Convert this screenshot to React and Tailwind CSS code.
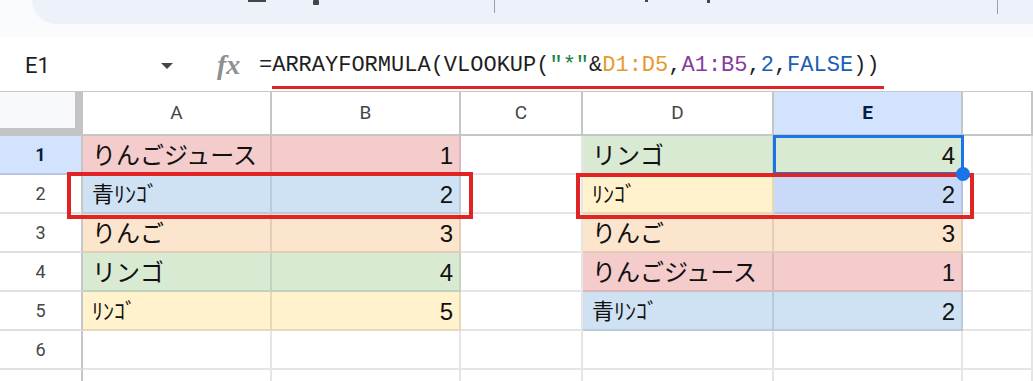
import React from "react";

const cols = "grid-cols-[83px_189px_189px_122px_191px_189px_70px]";

const left = [
  { t: "りんごジュース", n: 1, bg: "bg-[#f4cccc]" },
  { t: "青ﾘﾝｺﾞ", n: 2, bg: "bg-[#cfe2f3]", small: true },
  { t: "りんご", n: 3, bg: "bg-[#fce5cd]" },
  { t: "リンゴ", n: 4, bg: "bg-[#d9ead3]" },
  { t: "ﾘﾝｺﾞ", n: 5, bg: "bg-[#fff2cc]", small: true },
];

const right = [
  { t: "リンゴ", n: 4, bg: "bg-[#d9ead3]", nbg: "bg-[#d9ead3]" },
  { t: "ﾘﾝｺﾞ", n: 2, bg: "bg-[#fff2cc]", nbg: "bg-[#c9daf8]", small: true },
  { t: "りんご", n: 3, bg: "bg-[#fce5cd]", nbg: "bg-[#fce5cd]" },
  { t: "りんごジュース", n: 1, bg: "bg-[#f4cccc]", nbg: "bg-[#f4cccc]" },
  { t: "青ﾘﾝｺﾞ", n: 2, bg: "bg-[#cfe2f3]", nbg: "bg-[#cfe2f3]", small: true },
];

const cell = "h-[39px] border-r-2 border-b-2 border-black/[0.1] flex items-center";
const cellFont = "font-['Liberation_Sans','Noto_Sans_CJK_JP',sans-serif] text-[#111] leading-none";

function TextCell({ row }) {
  if (!row) return <div className={`${cell}`} />;
  return (
    <div className={`${cell} ${row.bg} ${cellFont} pl-[9px] pt-[2px] ${row.small ? "text-[22px]" : "text-[24px]"}`}>
      {row.t}
    </div>
  );
}

function NumCell({ row, bg }) {
  if (!row) return <div className={`${cell}`} />;
  return (
    <div className={`${cell} ${bg || row.bg} ${cellFont} justify-end pr-[6px] pt-[2px] text-[24px]`}>
      {row.n}
    </div>
  );
}

export default function App() {
  const rows = [0, 1, 2, 3, 4, 5, 6];
  return (
    <div className="relative w-[1033px] h-[381px] overflow-hidden bg-white font-['Roboto',sans-serif]">
      {/* toolbar strip */}
      <div className="h-[37px] bg-[#f9fbfd] pl-[32px]">
        <div className="h-[24px] bg-[#edf2fa] rounded-bl-[24px]">
          <svg width="1001" height="24" viewBox="0 0 1001 24">
            <rect x="216" y="0" width="18" height="2" fill="#444746" />
            <rect x="281" y="0" width="6" height="5" rx="1" fill="#444746" />
            <rect x="613" y="0" width="3" height="2" fill="#444746" />
            <rect x="675" y="0" width="3" height="3" fill="#444746" />
            <rect x="462" y="0" width="1" height="13" fill="#9aa0a6" />
            <rect x="965" y="0" width="1" height="14" fill="#9aa0a6" />
          </svg>
        </div>
      </div>

      {/* formula bar */}
      <div className="h-[55px] flex items-center pt-[4px] border-b border-[#c7c7c7]">
        <div className="w-[190px] flex items-center pl-[25px]">
          <span className="text-[22px] leading-none text-[#1f1f1f]">E1</span>
          <svg className="ml-auto mr-[17px]" width="12" height="6" viewBox="0 0 12 6">
            <path d="M0 0 L12 0 L6 6 Z" fill="#444746" />
          </svg>
        </div>
        <div className="ml-[27px] w-[26px] text-[28px] leading-none italic font-bold text-[#8f8f8f] font-['Liberation_Serif',serif] pb-[2px]">
          fx
        </div>
        <div className="ml-[16px] text-[22px] leading-none text-[#1f1f1f] font-['Liberation_Mono',monospace] whitespace-pre">
          =ARRAYFORMULA(VLOOKUP(
          <span className="text-[#188038]">"*"</span>&amp;
          <span className="text-[#e69a2e]">D1:D5</span>,
          <span className="text-[#8a3a9c]">A1:B5</span>,
          <span className="text-[#1a5fb4]">2</span>,
          <span className="text-[#1a5fb4]">FALSE</span>))
        </div>
      </div>

      {/* sheet grid */}
      <div className={`grid ${cols}`}>
        <div className="h-[44px] bg-[#f8f9fa] border-r-[8px] border-b-[8px] border-[#c4c4c4]" />
        {["A", "B", "C", "D", "E", "F"].map((c) => (
          <div
            key={c}
            className={`h-[44px] border-r-2 border-b-2 border-[#c4c7c5] flex items-center justify-center text-[19px] ${
              c === "E" ? "bg-[#d3e3fd] font-bold text-[#041e49]" : "text-[#444746]"
            }`}
          >
            {c === "F" ? "" : c}
          </div>
        ))}

        {rows.map((i) => (
          <React.Fragment key={i}>
            <div
              className={`h-[39px] border-r-2 border-b-2 border-r-[#c4c7c5] border-b-black/[0.12] flex items-center justify-center text-[18px] ${
                i === 0 ? "bg-[#d3e3fd] font-bold text-[#041e49]" : "text-[#444746]"
              }`}
            >
              {i + 1}
            </div>
            <TextCell row={left[i]} />
            <NumCell row={left[i]} />
            <div className={cell} />
            <TextCell row={right[i]} />
            <NumCell row={right[i]} bg={right[i] && right[i].nbg} />
            <div className={cell} />
          </React.Fragment>
        ))}
      </div>

      {/* annotations and selection */}
      <div className="absolute left-[272px] top-[86px] w-[612px] h-[3px] bg-[#e02424]" />
      <div className="absolute left-[773px] top-[135px] w-[191px] h-[40px] border-[3px] border-[#1a73e8]" />
      <div className="absolute left-[67px] top-[172px] w-[406px] h-[47px] border-4 border-[#e02424]" />
      <div className="absolute left-[576px] top-[173px] w-[398px] h-[46px] border-4 border-[#e02424]" />
      <div className="absolute left-[956px] top-[167px] w-[14px] h-[14px] rounded-full bg-[#1a73e8]" />
    </div>
  );
}
